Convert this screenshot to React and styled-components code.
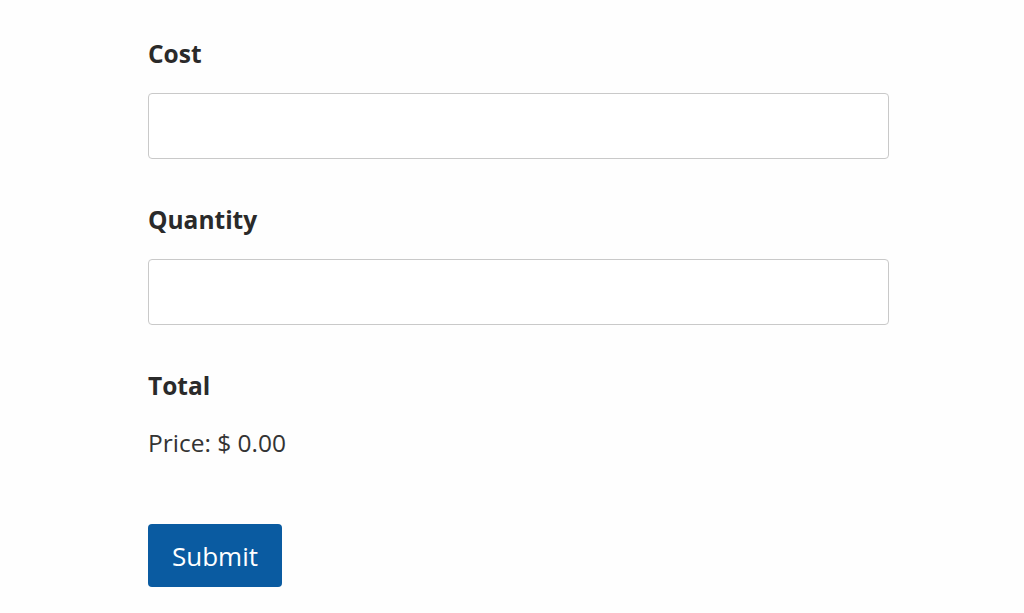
import React from "react";
import styled, { createGlobalStyle } from "styled-components";

const Global = createGlobalStyle`
  html, body { margin: 0; padding: 0; background: #fefefe; }
  body { font-family: "Open Sans", "Liberation Sans", sans-serif; color: #2b2b2b; }
`;

const Form = styled.form`
  display: flex;
  flex-direction: column;
  align-items: flex-start;
  width: 741px;
  padding: 36px 0 0 148px;
`;

const Field = styled.div`
  display: flex;
  flex-direction: column;
  width: 100%;
  gap: 21px;
  margin-bottom: 43px;
`;

const Label = styled.label`
  font-size: 24.5px;
  font-weight: 700;
  line-height: 36px;
  color: #2a2a2a;
`;

const Input = styled.input`
  box-sizing: border-box;
  width: 741px;
  height: 66px;
  border: 1px solid #c9c9c9;
  border-radius: 4px;
  background: #fff;
  font: inherit;
  font-size: 22px;
  padding: 0 14px;
  outline: none;
`;

const Total = styled.div`
  display: flex;
  flex-direction: column;
  gap: 22px;
  margin-bottom: 65px;
`;

const Price = styled.div`
  font-size: 24.5px;
  line-height: 33px;
  color: #333;
`;

const Button = styled.button`
  box-sizing: border-box;
  width: 134px;
  height: 63px;
  border: none;
  border-radius: 4px;
  background: #0a5ba1;
  color: #fff;
  font-family: "Open Sans", "Liberation Sans", sans-serif;
  font-size: 26px;
  cursor: pointer;
`;

export default function App() {
  return (
    <>
      <Global />
      <Form onSubmit={(e) => e.preventDefault()}>
        <Field>
          <Label htmlFor="cost">Cost</Label>
          <Input id="cost" />
        </Field>
        <Field>
          <Label htmlFor="qty">Quantity</Label>
          <Input id="qty" />
        </Field>
        <Total>
          <Label as="div">Total</Label>
          <Price>Price: $ 0.00</Price>
        </Total>
        <Button type="submit">Submit</Button>
      </Form>
    </>
  );
}
